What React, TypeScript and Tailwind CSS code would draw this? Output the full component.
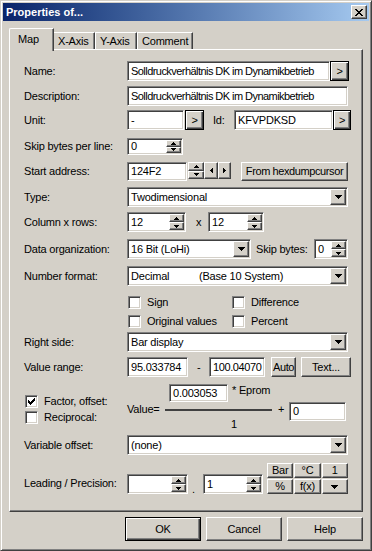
import React from 'react';

// classic 3D frames
const SUNKEN =
  'bg-white border border-t-[#808080] border-l-[#808080] border-r-white border-b-white shadow-[inset_1px_1px_0_#404040,inset_-1px_-1px_0_#d4d0c8]';
const RAISED =
  'bg-[#d4d0c8] border border-t-white border-l-white border-r-[#404040] border-b-[#404040] shadow-[inset_-1px_-1px_0_#808080]';
const DEFBTN =
  'bg-[#d4d0c8] border border-black shadow-[inset_1px_1px_0_#ffffff,inset_-1px_-1px_0_#404040,inset_-2px_-2px_0_#808080]';

const UpArrow = () => (
  <svg width="5" height="3" viewBox="0 0 5 3">
    <path d="M2 0h1v1H2zM1 1h3v1H1zM0 2h5v1H0z" fill="#000" />
  </svg>
);
const DownArrow = () => (
  <svg width="5" height="3" viewBox="0 0 5 3">
    <path d="M0 0h5v1H0zM1 1h3v1H1zM2 2h1v1H2z" fill="#000" />
  </svg>
);
const DropArrow = () => (
  <svg width="7" height="4" viewBox="0 0 7 4">
    <path d="M0 0h7v1H0zM1 1h5v1H1zM2 2h3v1H2zM3 3h1v1H3z" fill="#000" />
  </svg>
);
const LeftArrow = () => (
  <svg width="3" height="5" viewBox="0 0 3 5">
    <path d="M2 0h1v5H2zM1 1h1v3H1zM0 2h1v1H0z" fill="#000" />
  </svg>
);
const RightArrow = () => (
  <svg width="3" height="5" viewBox="0 0 3 5">
    <path d="M0 0h1v5H0zM1 1h1v3H1zM2 2h1v1H2z" fill="#000" />
  </svg>
);

interface FieldProps {
  value?: string;
  className: string;
  textClass?: string;
  spin?: boolean;
  drop?: boolean;
}

/** Sunken text box, optionally with an up/down spinner or a dropdown button inside. */
const Field: React.FC<FieldProps> = ({ value = '', className, textClass = '', spin, drop }) => (
  <div className={`${SUNKEN} flex items-stretch shrink-0 p-[1px] ${className}`}>
    <div className={`flex-1 flex items-center pl-[2px] overflow-hidden whitespace-nowrap ${textClass}`}>{value}</div>
    {spin && (
      <div className="flex flex-col w-[15px] shrink-0">
        <div className={`${RAISED} flex-1 flex items-center justify-center`}>
          <UpArrow />
        </div>
        <div className={`${RAISED} flex-1 flex items-center justify-center`}>
          <DownArrow />
        </div>
      </div>
    )}
    {drop && (
      <div className={`${RAISED} w-[16px] shrink-0 flex items-center justify-center`}>
        <DropArrow />
      </div>
    )}
  </div>
);

const Check: React.FC<{ checked?: boolean; label: string; className?: string }> = ({
  checked,
  label,
  className = '',
}) => (
  <div className={`flex items-center ${className}`}>
    <div className={`${SUNKEN} w-[13px] h-[13px] shrink-0 flex items-center justify-center`}>
      {checked && (
        <svg width="7" height="7" viewBox="0 0 7 7">
          <path
            d="M6 0h1v3H6zM5 1h1v3H5zM4 2h1v3H4zM3 3h1v3H3zM2 4h1v3H2zM1 3h1v3H1zM0 2h1v3H0z"
            fill="#000"
          />
        </svg>
      )}
    </div>
    <span className="ml-[6px]">{label}</span>
  </div>
);

const Row: React.FC<{ label: string; className: string; children: React.ReactNode }> = ({
  label,
  className,
  children,
}) => (
  <div className={`flex items-center ${className}`}>
    <div className="w-[103px] shrink-0">{label}</div>
    {children}
  </div>
);

const SmallBtn: React.FC<{ children: React.ReactNode; className: string }> = ({ children, className }) => (
  <div className={`${DEFBTN} shrink-0 flex items-center justify-center ${className}`}>{children}</div>
);

const Btn: React.FC<{ children: React.ReactNode; className: string }> = ({ children, className }) => (
  <div className={`${RAISED} shrink-0 flex items-center justify-center whitespace-nowrap ${className}`}>{children}</div>
);

export default function App() {
  return (
    <div className="w-[372px] h-[551px] bg-[#d4d0c8] border border-t-[#d4d0c8] border-l-[#d4d0c8] border-r-[#404040] border-b-[#404040] shadow-[inset_1px_1px_0_#ffffff,inset_-1px_-1px_0_#808080] p-[2px] font-['Liberation_Sans',Arial,sans-serif] text-[11px] leading-[13px] tracking-[-0.2px] text-black select-none">
      {/* title bar */}
      <div className="h-[18px] flex items-center justify-between bg-gradient-to-r from-[#0a246a] to-[#a6caf0]">
        <span className="pl-[3px] text-white font-bold text-[11px] tracking-normal">Properties of...</span>
        <div className={`${RAISED} w-[16px] h-[14px] mr-[2px] flex items-center justify-center`}>
          <svg width="8" height="7" viewBox="0 0 8 7">
            <path
              d="M0 0h2v1H0zM6 0h2v1H6zM1 1h2v1H1zM5 1h2v1H5zM2 2h4v1H2zM3 3h2v1H3zM2 4h4v1H2zM1 5h2v1H1zM5 5h2v1H5zM0 6h2v1H0zM6 6h2v1H6z"
              fill="#000"
            />
          </svg>
        </div>
      </div>

      {/* tabs */}
      <div className="flex items-end h-[28px] ml-[6px] relative z-10">
        <div className="w-[45px] h-[23px] -mb-[2px] bg-[#d4d0c8] border-l border-t border-l-white border-t-white border-r border-r-[#404040] shadow-[inset_-1px_0_0_#808080] rounded-tl-[2px] flex items-start pt-[4px] pl-[8px]">
          Map
        </div>
        <div className="w-[41px] h-[17px] bg-[#d4d0c8] border-t border-t-white border-r border-r-[#404040] shadow-[inset_-1px_0_0_#808080] flex items-center pl-[4px]">
          X-Axis
        </div>
        <div className="w-[42px] h-[17px] bg-[#d4d0c8] border-l border-l-white border-t border-t-white border-r border-r-[#404040] shadow-[inset_-1px_0_0_#808080] flex items-center pl-[4px]">
          Y-Axis
        </div>
        <div className="w-[56px] h-[17px] bg-[#d4d0c8] border-l border-l-white border-t border-t-white border-r border-r-[#404040] shadow-[inset_-1px_0_0_#808080] flex items-center pl-[4px]">
          Comment
        </div>
      </div>

      {/* tab panel */}
      <div className="mx-[6px] h-[463px] border border-t-white border-l-white border-r-[#404040] border-b-[#404040] shadow-[inset_-1px_-1px_0_#808080] pl-[14px] pt-[11px] flex flex-col">
        <Row label="Name:" className="">
          <Field
            value="Solldruckverhältnis DK im Dynamikbetrieb"
            textClass="tracking-[-0.55px]"
            className="w-[203px] h-[20px]"
          />
          <SmallBtn className="w-[19px] h-[20px]">&gt;</SmallBtn>
        </Row>
        <Row label="Description:" className="mt-[5px]">
          <Field
            value="Solldruckverhältnis DK im Dynamikbetrieb"
            textClass="tracking-[-0.55px]"
            className="w-[221px] h-[20px]"
          />
        </Row>
        <Row label="Unit:" className="mt-[4px]">
          <Field value="-" className="w-[57px] h-[20px]" />
          <SmallBtn className="w-[19px] h-[20px] ml-[1px]">&gt;</SmallBtn>
          <span className="ml-[9px] w-[20px]">Id:</span>
          <Field value="KFVPDKSD" className="w-[99px] h-[20px] ml-[1px]" />
          <SmallBtn className="w-[18px] h-[20px]">&gt;</SmallBtn>
        </Row>
        <Row label="Skip bytes per line:" className="mt-[8px]">
          <Field value="0" spin className="w-[56px] h-[17px]" />
        </Row>
        <Row label="Start address:" className="mt-[7px]">
          <Field value="124F2" className="w-[60px] h-[19px]" />
          <div className="flex flex-col w-[16px] h-[17px] ml-[1px] mt-[-2px]">
            <div className={`${RAISED} flex-1 flex items-center justify-center`}>
              <UpArrow />
            </div>
            <div className={`${RAISED} flex-1 flex items-center justify-center`}>
              <DownArrow />
            </div>
          </div>
          <Btn className="w-[14px] h-[17px] mt-[-2px]">
            <LeftArrow />
          </Btn>
          <Btn className="w-[13px] h-[17px] mt-[-2px]">
            <RightArrow />
          </Btn>
          <Btn className="w-[107px] h-[19px] ml-[10px] tracking-[-0.4px]">From hexdumpcursor</Btn>
        </Row>
        <Row label="Type:" className="mt-[6px]">
          <Field value="Twodimensional" drop className="w-[221px] h-[20px]" />
        </Row>
        <Row label="Column x rows:" className="mt-[5px]">
          <Field value="12" spin className="w-[59px] h-[20px]" />
          <span className="ml-[10px] w-[12px]">x</span>
          <Field value="12" spin className="w-[56px] h-[20px]" />
        </Row>
        <Row label="Data organization:" className="mt-[7px]">
          <Field value="16 Bit (LoHi)" drop className="w-[124px] h-[20px]" />
          <span className="ml-[5px] w-[58px]">Skip bytes:</span>
          <Field value="0" spin className="w-[34px] h-[20px]" />
        </Row>
        <Row label="Number format:" className="mt-[7px]">
          <div className={`${SUNKEN} flex items-stretch shrink-0 p-[1px] w-[221px] h-[20px]`}>
            <div className="flex-1 flex items-center pl-[2px] whitespace-nowrap">
              <span className="w-[68px]">Decimal</span>
              <span>(Base 10 System)</span>
            </div>
            <div className={`${RAISED} w-[16px] shrink-0 flex items-center justify-center`}>
              <DropArrow />
            </div>
          </div>
        </Row>
        <div className="flex mt-[10px] ml-[104px]">
          <Check label="Sign" className="w-[104px]" />
          <Check label="Difference" />
        </div>
        <div className="flex mt-[6px] ml-[104px]">
          <Check label="Original values" className="w-[104px]" />
          <Check label="Percent" />
        </div>
        <Row label="Right side:" className="mt-[4px]">
          <Field value="Bar display" drop className="w-[221px] h-[20px]" />
        </Row>
        <Row label="Value range:" className="mt-[5px]">
          <Field value="95.033784" className="w-[61px] h-[20px]" />
          <span className="ml-[9px] w-[12px]">-</span>
          <Field value="100.04070" textClass="tracking-[-0.4px]" className="w-[56px] h-[20px]" />
          <Btn className="w-[25px] h-[20px] ml-[6px] tracking-[-0.4px]">Auto</Btn>
          <Btn className="w-[50px] h-[20px] ml-[5px]">Text...</Btn>
        </Row>

        {/* factor / offset */}
        <div className="flex items-start mt-[7px] h-[46px]">
          <div className="w-[103px] shrink-0 flex flex-col pl-[1px] pt-[11px]">
            <Check checked label="Factor, offset:" />
            <Check label="Reciprocal:" className="mt-[3px]" />
          </div>
          <span className="mt-[19px] w-[38px]">Value=</span>
          <div className="flex flex-col w-[107px]">
            <div className="flex items-start">
              <Field value="0.003053" className="w-[59px] h-[18px] ml-[4px]" />
              <span className="ml-[4px]">* Eprom</span>
            </div>
            <div className="h-[2px] bg-[#404040] mt-[7px]" />
            <span className="ml-[66px] mt-[7px]">1</span>
          </div>
          <span className="mt-[19px] ml-[6px] w-[11px]">+</span>
          <Field value="0" className="w-[57px] h-[19px] mt-[18px]" />
        </div>

        <Row label="Variable offset:" className="mt-[5px]">
          <Field value="(none)" drop className="w-[221px] h-[20px]" />
        </Row>

        <div className="flex items-start mt-[8px]">
          <div className="w-[103px] shrink-0 mt-[14px]">Leading / Precision:</div>
          <Field spin className="w-[61px] h-[20px] mt-[11px]" />
          <span className="ml-[4px] w-[11px] mt-[20px]">.</span>
          <Field value="1" spin className="w-[60px] h-[20px] mt-[11px]" />
          <div className="grid grid-cols-3 gap-[1px] ml-[4px] w-[81px]">
            <Btn className="h-[15px]">Bar</Btn>
            <Btn className="h-[15px]">°C</Btn>
            <Btn className="h-[15px]">1</Btn>
            <Btn className="h-[15px]">%</Btn>
            <Btn className="h-[15px]">f(x)</Btn>
            <Btn className="h-[15px]">
              <DropArrow />
            </Btn>
          </div>
        </div>
      </div>

      {/* dialog buttons */}
      <div className="flex justify-end gap-[5px] mr-[6px] mt-[5px]">
        <SmallBtn className="w-[76px] h-[24px]">OK</SmallBtn>
        <Btn className="w-[76px] h-[24px]">Cancel</Btn>
        <Btn className="w-[76px] h-[24px]">Help</Btn>
      </div>
    </div>
  );
}
